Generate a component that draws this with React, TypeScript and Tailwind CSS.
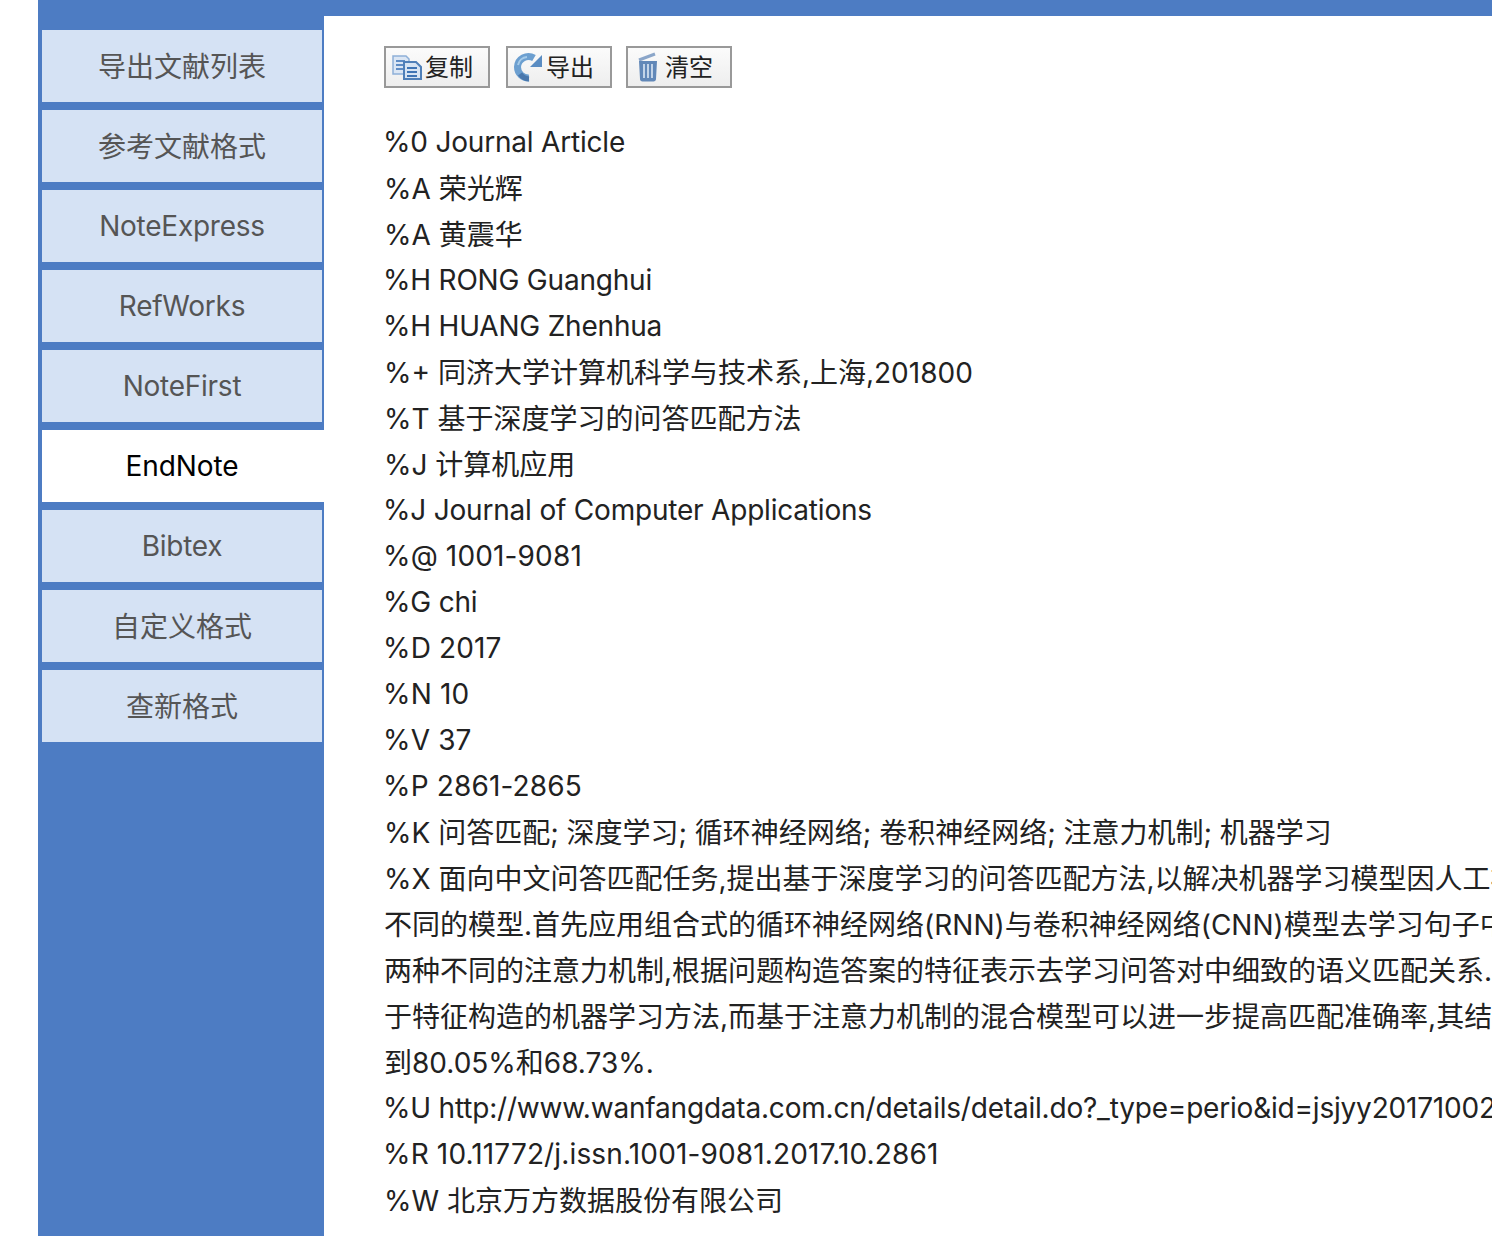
import React from 'react';

const FONT = 'font-["Inter","Noto_Sans_CJK_SC",sans-serif]';

const tabs = ['导出文献列表', '参考文献格式', 'NoteExpress', 'RefWorks', 'NoteFirst', 'EndNote', 'Bibtex', '自定义格式', '查新格式'];

const lines = [
  '%0 Journal Article',
  '%A 荣光辉',
  '%A 黄震华',
  '%H RONG Guanghui',
  '%H HUANG Zhenhua',
  '%+ 同济大学计算机科学与技术系,上海,201800',
  '%T 基于深度学习的问答匹配方法',
  '%J 计算机应用',
  '%J Journal of Computer Applications',
  '%@ 1001-9081',
  '%G chi',
  '%D 2017',
  '%N 10',
  '%V 37',
  '%P 2861-2865',
  '%K 问答匹配; 深度学习; 循环神经网络; 卷积神经网络; 注意力机制; 机器学习',
  '%X 面向中文问答匹配任务,提出基于深度学习的问答匹配方法,以解决机器学习模型因人工构造特征',
  '不同的模型.首先应用组合式的循环神经网络(RNN)与卷积神经网络(CNN)模型去学习句子中的语义',
  '两种不同的注意力机制,根据问题构造答案的特征表示去学习问答对中细致的语义匹配关系.实验结果',
  '于特征构造的机器学习方法,而基于注意力机制的混合模型可以进一步提高匹配准确率,其结果分别达',
  '到80.05%和68.73%.',
  '%U http://www.wanfangdata.com.cn/details/detail.do?_type=perio&id=jsjyy201710020',
  '%R 10.11772/j.issn.1001-9081.2017.10.2861',
  '%W 北京万方数据股份有限公司',
];

const isLatin = (s: string) => !/[^\x00-\x7f]/.test(s);

// Inter runs wide on letters and narrow on digits; CJK lines sit a pixel lower in the reference
const lineClass = (s: string) => {
  if (!isLatin(s)) return 'h-[46px] pt-px';
  if (/^%[@DNVPR] /.test(s)) return '-ml-px h-[46px] tracking-[0.15px]';
  return '-ml-px h-[46px] tracking-[-0.2px]';
};

const CopyIcon = () => (
  <svg width="30" height="26" viewBox="0 0 30 26">
    <path d="M1 2h13l3 3v15H1z" fill="#dbe6f4" stroke="#8fb0d8" strokeWidth="1.5" />
    <path d="M4 7h9M4 11h9M4 15h7" stroke="#5f8cc4" strokeWidth="2" />
    <path d="M12 8h12l5 5v12H12z" fill="#d7e4f3" stroke="#4f7fb8" strokeWidth="2" />
    <path d="M15 14h10M15 18h10M15 22h10" stroke="#3f74b4" strokeWidth="2" />
  </svg>
);

const ExportIcon = () => (
  <svg width="30" height="30" viewBox="0 0 30 30">
    <path d="M16 26A11 11 0 0 1 4.500 15 11 11 0 0 1 21 6" fill="none" stroke="#6c9fd0" strokeWidth="7" />
    <path d="M16 27A12 12 0 0 1 7 22" fill="none" stroke="#4a78ad" strokeWidth="5" />
    <path d="M29 3V15H17z" fill="#5a8cc2" />
    <path d="M5 13A10 10 0 0 1 14 5" fill="none" stroke="#a6cbe9" strokeWidth="2" />
  </svg>
);

const TrashIcon = () => (
  <svg width="22" height="30" viewBox="0 0 22 30">
    <path d="M2 8L18 2" stroke="#8ba6c9" strokeWidth="3" />
    <path d="M2 9h18l-1 18c0 1.500-1 2.500-2.500 2.500h-11C4 29.500 3 28.500 3 27z" fill="#6288b8" />
    <path d="M7 12v14M11 12v14M15 12v14" stroke="#c3d4e8" strokeWidth="2" />
  </svg>
);

const ToolButton = ({ icon, label, iconClass, gapClass }: { icon: React.ReactNode; label: string; iconClass: string; gapClass: string }) => (
  <button className={`flex h-[42px] w-[106px] items-center border-2 border-[#999999] bg-gradient-to-b from-[#fbfbfb] to-[#eeeeee] text-[24px] text-[#222222] ${iconClass}`}>
    {icon}
    <span className={`pt-0.5 ${gapClass}`}>{label}</span>
  </button>
);

export default function App() {
  return (
    <div className={`h-[1236px] w-[1492px] overflow-hidden bg-white pl-[38px] ${FONT}`}>
      <div className="h-4 bg-[#4d7cc3]" />
      <div className="flex h-[1220px]">
        <div className="flex w-[286px] shrink-0 flex-col gap-2 bg-[#4d7cc3] pt-3.5 pr-0.5 pl-1">
          {tabs.map(tab =>
            tab === 'EndNote' ? (
              <div key={tab} className="-mr-0.5 flex h-[72px] items-center justify-center bg-white pr-0.5 text-[28px] tracking-[-0.1px] text-black">
                {tab}
              </div>
            ) : isLatin(tab) ? (
              <div key={tab} className="flex h-[72px] items-center justify-center bg-[#d5e2f4] text-[28px] tracking-[-0.25px] text-[#555555]">
                {tab}
              </div>
            ) : (
              <div key={tab} className="flex h-[72px] items-center justify-center bg-[#d5e2f4] pt-0.5 text-[28px] text-[#555555]">
                {tab}
              </div>
            ),
          )}
        </div>
        <div className="min-w-0 flex-1 overflow-hidden pt-[30px] pl-[60px]">
          <div className="flex">
            <ToolButton icon={<CopyIcon />} label="复制" iconClass="pl-1.5" gapClass="ml-[3px]" />
            <div className="ml-4">
              <ToolButton icon={<ExportIcon />} label="导出" iconClass="pl-[5px]" gapClass="ml-[3px]" />
            </div>
            <div className="ml-3.5">
              <ToolButton icon={<TrashIcon />} label="清空" iconClass="pl-[9px]" gapClass="ml-[6px]" />
            </div>
          </div>
          <div className="mt-[31px] text-[28px] leading-[46px] whitespace-nowrap text-[#222222]">
            {lines.map((line, i) => (
              <div key={i} className={lineClass(line)}>
                {line}
              </div>
            ))}
          </div>
        </div>
      </div>
    </div>
  );
}
